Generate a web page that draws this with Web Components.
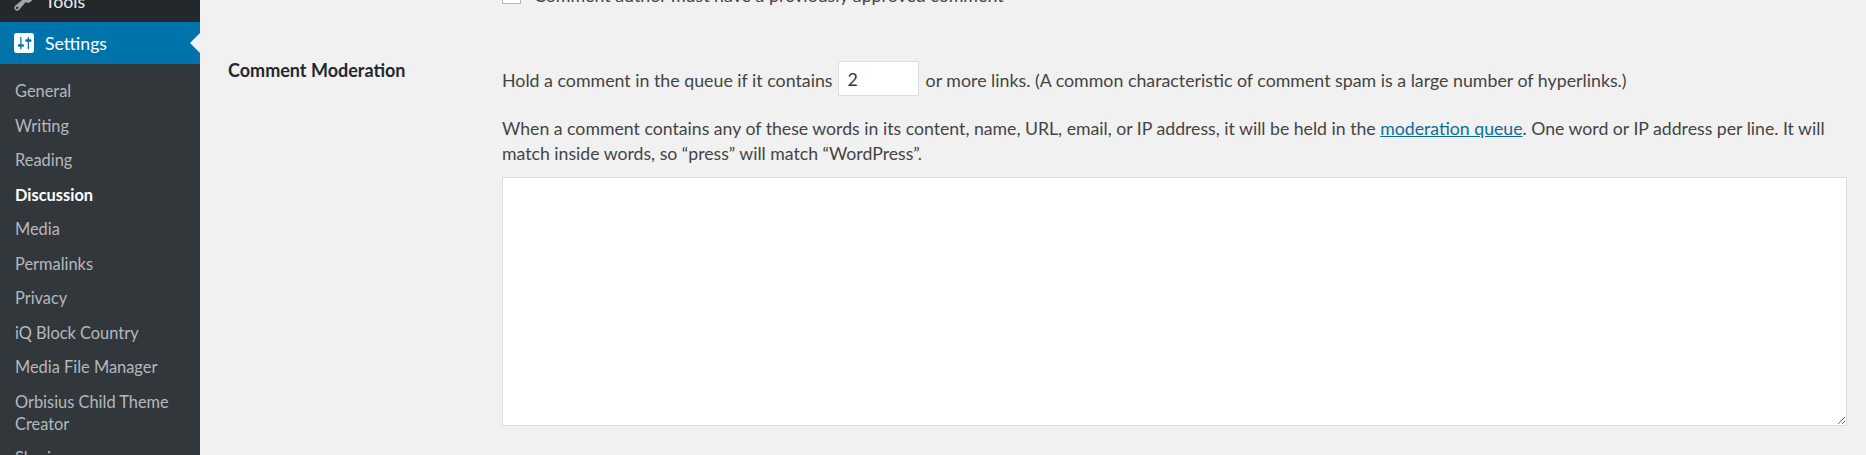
<!DOCTYPE html>
<html>
<head>
<meta charset="utf-8">
<title>Discussion Settings</title>
<style>
html, body { margin: 0; height: 455px; overflow: hidden; background: #f1f1f1; }
body { font: 17.8px/25px Lato, "Open Sans", "Liberation Sans", sans-serif; color: #444; }
</style>
</head>
<body>
<wp-page>
  <wp-sidebar slot="sidebar">
    <wp-menu-item icon="tools">Tools</wp-menu-item>
    <wp-menu-item icon="settings" current>Settings</wp-menu-item>
    <wp-submenu>
      <wp-sub-item>General</wp-sub-item>
      <wp-sub-item>Writing</wp-sub-item>
      <wp-sub-item>Reading</wp-sub-item>
      <wp-sub-item current>Discussion</wp-sub-item>
      <wp-sub-item>Media</wp-sub-item>
      <wp-sub-item>Permalinks</wp-sub-item>
      <wp-sub-item>Privacy</wp-sub-item>
      <wp-sub-item>iQ Block Country</wp-sub-item>
      <wp-sub-item>Media File Manager</wp-sub-item>
      <wp-sub-item>Orbisius Child Theme Creator</wp-sub-item>
      <wp-sub-item>Sharing</wp-sub-item>
    </wp-submenu>
  </wp-sidebar>

  <wp-check-line>Comment author must have a previously approved comment</wp-check-line>

  <wp-form-row label="Comment Moderation">
    <wp-link-limit value="2"></wp-link-limit>
    <wp-moderation-text>When a comment contains any of these words in its content, name, URL, email, or IP address, it will be held in the <a href="#">moderation queue</a>. One word or IP address per line. It will match inside words, so “press” will match “WordPress”.</wp-moderation-text>
    <wp-word-list></wp-word-list>
  </wp-form-row>
</wp-page>

<script>
class WpPage extends HTMLElement {
    constructor() {
        super();
        this.attachShadow({ mode: 'open' }).innerHTML = `
        <style>
            :host { display: flex; height: 455px; overflow: hidden; }
            .side { flex: 0 0 200px; background: #32373c; overflow: hidden; }
            main { flex: 1; min-width: 0; padding: 0 19px 0 28px; }
        </style>
        <div class="side"><slot name="sidebar"></slot></div>
        <main><slot></slot></main>
        `;
    }
}
customElements.define('wp-page', WpPage);

class WpSidebar extends HTMLElement {
    constructor() {
        super();
        this.attachShadow({ mode: 'open' }).innerHTML = `
        <style>
            :host { display: block; margin-top: -20px; }
        </style>
        <slot></slot>
        `;
    }
}
customElements.define('wp-sidebar', WpSidebar);

const MENU_ICONS = {
    tools: `<svg viewBox="0 0 20 20" width="23" height="23"><path fill="#a0a5aa" d="M16.68 9.77c-1.34 1.34-3.3 1.67-4.95.99l-5.41 6.52c-.99.99-2.59.99-3.58 0s-.99-2.59 0-3.57l6.52-5.42c-.68-1.65-.35-3.61.99-4.95 1.28-1.28 3.12-1.62 4.72-1.06l-2.89 2.89 2.82 2.82 2.86-2.87c.53 1.58.18 3.39-1.08 4.67zM3.81 16.21c.4.39 1.04.39 1.43 0 .4-.4.4-1.04 0-1.43-.39-.4-1.03-.4-1.43 0-.39.39-.39 1.03 0 1.43z"/></svg>`,
    settings: `<svg viewBox="2 2 16 16" width="20" height="20"><path fill="#fff" fill-rule="evenodd" d="M18 16V4c0-1.1-.9-2-2-2H4c-1.1 0-2 .9-2 2v12c0 1.1.9 2 2 2h12c1.1 0 2-.9 2-2zM8 11h1c.55 0 1 .45 1 1s-.45 1-1 1H8v1.5c0 .28-.22.5-.5.5s-.5-.22-.5-.5V13H6c-.55 0-1-.45-1-1s.45-1 1-1h1V5.5c0-.28.22-.5.5-.5s.5.22.5.5V11zm5-2h-1c-.55 0-1-.45-1-1s.45-1 1-1h1V5.5c0-.28.22-.5.5-.5s.5.22.5.5V7h1c.55 0 1 .45 1 1s-.45 1-1 1h-1v5.5c0 .28-.22.5-.5.5s-.5-.22-.5-.5V9z"/></svg>`
};

class WpMenuItem extends HTMLElement {
    constructor() {
        super();
        const icon = MENU_ICONS[this.getAttribute('icon')] || '';
        this.attachShadow({ mode: 'open' }).innerHTML = `
        <style>
            :host { display: flex; align-items: center; height: 42px; position: relative; background: #23282d; color: #eee; font-size: 17.7px; }
            :host([current]) { background: #0073aa; color: #fff; }
            .icon { flex: 0 0 45px; display: flex; justify-content: center; padding-left: 2px; box-sizing: border-box; }
            :host([current]) .icon { padding-left: 3px; }
            :host([current])::after {
                content: ""; position: absolute; right: 0; top: 50%; margin-top: -10px;
                border: 10px solid transparent; border-left-width: 0; border-right-color: #f1f1f1;
            }
        </style>
        <span class="icon">${icon}</span><slot></slot>
        `;
    }
}
customElements.define('wp-menu-item', WpMenuItem);

class WpSubmenu extends HTMLElement {
    constructor() {
        super();
        this.attachShadow({ mode: 'open' }).innerHTML = `
        <style>
            :host { display: block; padding-top: 10px; }
        </style>
        <slot></slot>
        `;
    }
}
customElements.define('wp-submenu', WpSubmenu);

class WpSubItem extends HTMLElement {
    constructor() {
        super();
        this.attachShadow({ mode: 'open' }).innerHTML = `
        <style>
            :host { display: block; padding: 6px 15px 6.5px; color: #b4b9be; font-size: 16.4px; line-height: 22px; }
            :host([current]) { color: #fff; font-weight: 700; }
        </style>
        <slot></slot>
        `;
    }
}
customElements.define('wp-sub-item', WpSubItem);

class WpCheckLine extends HTMLElement {
    constructor() {
        super();
        this.attachShadow({ mode: 'open' }).innerHTML = `
        <style>
            :host { display: flex; align-items: center; margin-left: 274px; margin-top: -15px; height: 20px; gap: 13px; }
            i { flex: 0 0 19px; height: 19px; margin-top: -2px; box-sizing: border-box; background: #fff; border: 1px solid #b4b9be; }
        </style>
        <i></i><slot></slot>
        `;
    }
}
customElements.define('wp-check-line', WpCheckLine);

class WpFormRow extends HTMLElement {
    constructor() {
        super();
        const label = this.getAttribute('label');
        this.attachShadow({ mode: 'open' }).innerHTML = `
        <style>
            :host { display: grid; grid-template-columns: 274px 1fr; margin-top: 56px; }
            .label { font-weight: 700; color: #23282d; font-size: 18px; line-height: 22px; margin-top: -2px; }
            .field { min-width: 0; }
        </style>
        <div class="label">${label}</div>
        <div class="field"><slot></slot></div>
        `;
    }
}
customElements.define('wp-form-row', WpFormRow);

class WpLinkLimit extends HTMLElement {
    constructor() {
        super();
        const value = this.getAttribute('value');
        this.attachShadow({ mode: 'open' }).innerHTML = `
        <style>
            :host { display: flex; align-items: flex-start; gap: 6px; height: 35px; }
            span { margin-top: 7px; }
            input { width: 81px; height: 35px; box-sizing: border-box; margin: 0 1px 0 -1px; padding: 0 9px; border: 1px solid #ddd; background: #fff; font: inherit; color: #32373c; outline: 0; }
        </style>
        <span>Hold a comment in the queue if it contains</span>
        <input type="text" value="${value}">
        <span>or more links. (A common characteristic of comment spam is a large number of hyperlinks.)</span>
        `;
    }
}
customElements.define('wp-link-limit', WpLinkLimit);

class WpModerationText extends HTMLElement {
    constructor() {
        super();
        this.attachShadow({ mode: 'open' }).innerHTML = `
        <style>
            :host { display: block; margin-top: 20px; line-height: 25px; font-size: 17.68px; }
            ::slotted(a) { color: #0d6d9b; }
        </style>
        <slot></slot>
        `;
    }
}
customElements.define('wp-moderation-text', WpModerationText);

class WpWordList extends HTMLElement {
    constructor() {
        super();
        this.attachShadow({ mode: 'open' }).innerHTML = `
        <style>
            :host { display: block; margin-top: 11px; }
            textarea { display: block; width: 100%; height: 249px; box-sizing: border-box; margin: 0; border: 1px solid #ddd; background: #fff; outline: 0; }
        </style>
        <textarea></textarea>
        `;
    }
}
customElements.define('wp-word-list', WpWordList);
</script>
</body>
</html>
